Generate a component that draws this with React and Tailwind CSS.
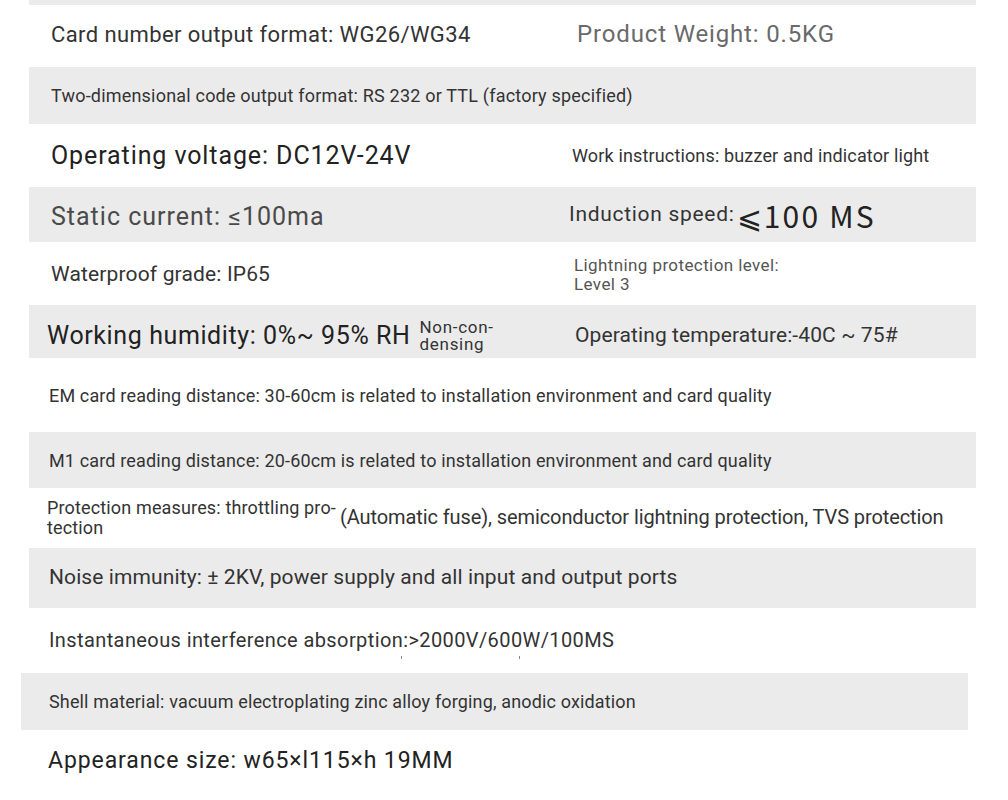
import React from 'react';

const font = { fontFamily: 'Roboto, "Noto Sans", "Liberation Sans", sans-serif' };

function Row({ gray, h, className = '', children }) {
  return (
    <div className={`${gray ? 'bg-[#ebebeb]' : 'bg-white'} ${h} ml-[29px] w-[947px] flex items-center shrink-0 ${className}`}>
      {children}
    </div>
  );
}

export default function App() {
  return (
    <div className="w-[1008px] h-[800px] bg-white overflow-hidden flex flex-col text-[#333] whitespace-nowrap" style={font}>
      <Row gray h="h-[5px]" />

      <Row h="h-[62px]">
        <span className="ml-[22px] w-[526px] text-[22px] tracking-[0.4px] pb-[4px]">Card number output format: WG26/WG34</span>
        <span className="text-[24px] tracking-[0.85px] text-[#6a6a6a] pb-[4px]">Product Weight: 0.5KG</span>
      </Row>

      <Row gray h="h-[57px]">
        <span className="ml-[22px] text-[18px] tracking-[0.2px] pb-[1px]">Two-dimensional code output format: RS 232 or TTL (factory specified)</span>
      </Row>

      <Row h="h-[63px]">
        <span className="ml-[22px] w-[521px] text-[25px] tracking-[0.9px] text-[#222]">Operating voltage: DC12V-24V</span>
        <span className="text-[18px] tracking-[0.15px]">Work instructions: buzzer and indicator light</span>
      </Row>

      <Row gray h="h-[55px]">
        <span className="ml-[22px] w-[518px] text-[25px] tracking-[1px] text-[#4a4a4a] pt-[4px]">Static current: ≤100ma</span>
        <span className="text-[21px] tracking-[0.7px] flex items-center pt-[1px]">
          Induction speed:
          <span className="text-[30px] tracking-[2.2px] ml-[2px] text-[#222]" style={{ fontFamily: '"Noto Sans CJK SC", "Noto Sans", sans-serif' }}>⩽100 MS</span>
        </span>
      </Row>

      <Row h="h-[63px]">
        <span className="ml-[22px] w-[523px] text-[21px] tracking-[0.15px] pt-[3px]">Waterproof grade: IP65</span>
        <span className="text-[17px] leading-[19px] tracking-[0.4px] text-[#555] pt-[3px]">Lightning protection level:<br />Level 3</span>
      </Row>

      <Row gray h="h-[53px]">
        <div className="w-[546px] flex items-center pt-[9px]">
          <span className="ml-[18px] text-[25px] tracking-[0.6px] text-[#222]">Working humidity: 0%~ 95% RH</span>
          <span className="ml-[9px] text-[17px] leading-[17px] tracking-[0.7px] text-[#333] pb-[1px]">Non-con-<br />densing</span>
        </div>
        <span className="text-[21px] tracking-[0.1px] pt-[9px]">Operating temperature:-40C ~ 75#</span>
      </Row>

      <Row h="h-[74px]">
        <span className="ml-[20px] text-[18px] tracking-[0.15px] pt-[1px]">EM card reading distance: 30-60cm is related to installation environment and card quality</span>
      </Row>

      <Row gray h="h-[56px]">
        <span className="ml-[20px] text-[18px] tracking-[0.15px] pt-[1px]">M1 card reading distance: 20-60cm is related to installation environment and card quality</span>
      </Row>

      <Row h="h-[60px]">
        <span className="ml-[18px] w-[293px] text-[18px] leading-[20px] tracking-[0.15px]">Protection measures: throttling pro-<br />tection</span>
        <span className="text-[20px] tracking-[-0.1px] pb-[2px]">(Automatic fuse), semiconductor lightning protection, TVS protection</span>
      </Row>

      <Row gray h="h-[60px]">
        <span className="ml-[20px] text-[21px] tracking-[0.1px]">Noise immunity: ± 2KV, power supply and all input and output ports</span>
      </Row>

      <Row h="h-[65px]">
        <div className="ml-[20px] flex flex-col">
          <span className="text-[20px] tracking-[0.4px] pt-[3px]">Instantaneous interference absorption:&gt;2000V/600W/100MS</span>
          <div className="flex h-[4px] mt-[1px]">
            <span className="ml-[352px] w-[1px] h-[3px] bg-[#888]" />
            <span className="ml-[117px] w-[1px] h-[3px] bg-[#888]" />
          </div>
        </div>
      </Row>

      <div className="bg-[#ebebeb] h-[57px] ml-[21px] w-[947px] flex items-center shrink-0">
        <span className="ml-[28px] text-[18px] tracking-[0.15px]">Shell material: vacuum electroplating zinc alloy forging, anodic oxidation</span>
      </div>

      <Row h="h-[70px]">
        <span className="ml-[19px] text-[23px] tracking-[0.9px] text-[#222] pb-[8px]">Appearance size: w65×l115×h 19MM</span>
      </Row>
    </div>
  );
}
